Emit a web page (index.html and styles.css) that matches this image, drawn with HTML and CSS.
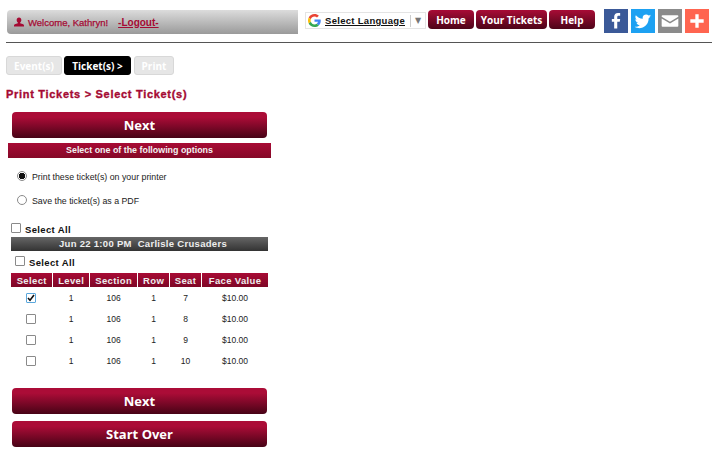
FILE: index.html
```html
<!DOCTYPE html>
<html lang="en">
<head>
  <meta charset="UTF-8">
  <title>Print Tickets</title>
  <link rel="stylesheet" href="styles.css">
</head>
<body>
  <div class="top">
    <div class="welcome">
      <svg class="user" viewBox="0 0 12 12"><path d="M6 0.5c1.8 0 2.8 1.3 2.8 3 0 1.3-.6 2.4-1.4 3v1l3.6 1.3c.6.2 1 .7 1 1.3V11.500H0V10.100c0-.6.4-1.100 1-1.300l3.600-1.300v-1C3.800 5.900 3.200 4.800 3.200 3.500c0-1.700 1-3 2.800-3z"/></svg>
      <span>Welcome, Kathryn!</span>
      <a href="#" class="logout">-Logout-</a>
    </div>
    <div class="translate">
      <svg class="glogo" viewBox="0 0 48 48">
        <path fill="#ea4335" d="M24 9.500c3.500 0 6.700 1.300 9.200 3.600l6.800-6.800C35.900 2.400 30.400 0 24 0 14.600 0 6.500 5.400 2.600 13.200l8 6.200C12.400 13.700 17.700 9.500 24 9.500z"/>
        <path fill="#4285f4" d="M47 24.500c0-1.600-.1-3.100-.4-4.500H24v9h12.900c-.6 3-2.200 5.500-4.700 7.200l7.700 6C44.400 37.900 47 31.800 47 24.500z"/>
        <path fill="#fbbc05" d="M10.500 28.600c-.5-1.400-.8-3-.8-4.600s.3-3.200.8-4.600l-8-6.200C.9 16.500 0 20.100 0 24s.9 7.500 2.600 10.800l7.900-6.200z"/>
        <path fill="#34a853" d="M24 48c6.500 0 11.900-2.100 15.900-5.800l-7.700-6c-2.200 1.400-4.900 2.300-8.200 2.300-6.300 0-11.600-4.200-13.500-9.900l-8 6.200C6.500 42.600 14.600 48 24 48z"/>
      </svg>
      <a href="#" class="lang">Select Language</a>
      <span class="arrow">▼</span>
    </div>
    <nav class="nav">
      <a href="#" class="nav-item home">Home</a>
      <a href="#" class="nav-item tickets">Your Tickets</a>
      <a href="#" class="nav-item help">Help</a>
    </nav>
    <div class="social">
      <span class="share fb"><svg viewBox="0 0 24 24"><path fill="#fff" d="M13.500 21v-8h3l.5-3.500h-3.500V7.400c0-1 .4-1.700 1.800-1.700H17V2.500c-.4-.1-1.500-.2-2.700-.2-2.700 0-4.500 1.600-4.500 4.600v2.600H7V13h2.800v8z"/></svg></span>
      <span class="share tw"><svg viewBox="0 0 24 24"><path fill="#fff" d="M22 6c-.7.3-1.500.6-2.400.7.900-.5 1.500-1.300 1.800-2.300-.8.500-1.700.8-2.600 1-1.600-1.700-4.300-1.800-5.900-.2-1.100 1-1.500 2.500-1.200 4C8.400 9 5.300 7.400 3.400 5c-1.100 1.900-.5 4.300 1.300 5.500-.7 0-1.300-.2-1.900-.5 0 2 1.400 3.700 3.300 4.100-.6.200-1.300.2-1.900.1.500 1.700 2.100 2.900 3.900 2.900-1.800 1.400-4 2-6.100 1.800 5.800 3.700 13.200 1.100 15.800-5 .7-1.600 1-3.300.9-5 .9-.6 1.600-1.300 2.300-2.900z"/></svg></span>
      <span class="share mail"><svg viewBox="0 0 24 24"><path fill="#fff" d="M3 5h18c.6 0 1 .4 1 1v.8l-10 6-10-6V6c0-.6.4-1 1-1zM2 9l10 6 10-6v9c0 .6-.4 1-1 1H3c-.6 0-1-.4-1-1z"/></svg></span>
      <span class="share more"><svg viewBox="0 0 24 24"><path fill="#fff" d="M10 4h4v6h6v4h-6v6h-4v-6H4v-4h6z"/></svg></span>
    </div>
  </div>
  <hr class="rule">

  <div class="steps">
    <span class="step">Event(s)</span>
    <span class="step current">Ticket(s) &gt;</span>
    <span class="step">Print</span>
  </div>

  <h1 class="title">Print Tickets &gt; Select Ticket(s)</h1>

  <div class="panel">
    <a href="#" class="big-btn">Next</a>
    <div class="options-bar">Select one of the following options</div>
    <label class="option"><input type="radio" name="how" checked> <span>Print these ticket(s) on your printer</span></label>
    <label class="option second"><input type="radio" name="how"> <span>Save the ticket(s) as a PDF</span></label>

    <label class="select-all first"><input type="checkbox"> Select All</label>
    <div class="event-bar">Jun 22 1:00 PM&nbsp; Carlisle Crusaders</div>
    <label class="select-all inner"><input type="checkbox"> Select All</label>

    <table class="tickets-table">
      <thead>
        <tr><th class="c1">Select</th><th class="c2">Level</th><th class="c3">Section</th><th class="c4">Row</th><th class="c5">Seat</th><th class="c6">Face Value</th></tr>
      </thead>
      <tbody>
        <tr><td><input type="checkbox" checked></td><td>1</td><td>106</td><td>1</td><td>7</td><td>$10.00</td></tr>
        <tr><td><input type="checkbox"></td><td>1</td><td>106</td><td>1</td><td>8</td><td>$10.00</td></tr>
        <tr><td><input type="checkbox"></td><td>1</td><td>106</td><td>1</td><td>9</td><td>$10.00</td></tr>
        <tr><td><input type="checkbox"></td><td>1</td><td>106</td><td>1</td><td>10</td><td>$10.00</td></tr>
      </tbody>
    </table>

    <a href="#" class="big-btn after-table">Next</a>
    <a href="#" class="big-btn start-over">Start Over</a>
  </div>
</body>
</html>
```

FILE: styles.css
```css
*{
  box-sizing: border-box;
}
html,body{
  height: 453px;
  overflow: hidden;
}
body{
  margin: 0;
  background: #fff;
  font-family: "Liberation Sans", Arial, sans-serif;
  font-size: 10px;
  color: #222;
}
a{
  text-decoration: none;
}

/* native controls, drawn to look like the older browser ones */
input[type=radio],
input[type=checkbox]{
  appearance: none;
  flex: none;
  background: #fff;
  border: 1px solid #8a8a8a;
}
input[type=radio]{
  border-radius: 50%;
}
input[type=radio]:checked{
  background: radial-gradient(circle, #111 3px, #fff 3.500px);
}
input[type=checkbox]{
  border-radius: 1px;
}
input[type=checkbox]:checked{
  border-color: #5aa7dc;
  background: #fff no-repeat center/8px 8px url("data:image/svg+xml,%3Csvg xmlns='http://www.w3.org/2000/svg' viewBox='0 0 8 8'%3E%3Cpath d='M1 4l2 2.300L7 1' fill='none' stroke='%23111' stroke-width='1.600'/%3E%3C/svg%3E");
}

.top{
  display: flex;
  align-items: flex-start;
  padding: 9px 0 0 7px;
  height: 42px;
}
.welcome{
  display: flex;
  align-items: center;
  width: 291px;
  height: 24px;
  margin-top: 1px;
  padding-left: 7px;
  border-radius: 4px 0 0 4px;
  background: linear-gradient(#dcdcdc, #9a9a9a);
  color: #a50a33;
}
.welcome .user{
  width: 10px;
  height: 10px;
  margin-right: 4px;
  fill: #a50a33;
}
.welcome span{
  font-size: 9.500px;
  -webkit-text-stroke: .25px #a50a33;
}
.logout{
  margin-left: 10px;
  color: #a50a33;
  font-weight: bold;
  text-decoration: underline;
}

.translate{
  display: flex;
  align-items: center;
  width: 121px;
  height: 17px;
  margin: 3px 0 0 7px;
  padding-left: 2px;
  border: 1px solid #e4e4e4;
}
.glogo{
  width: 13px;
  height: 13px;
  flex: none;
}
.lang{
  margin-left: 4px;
  color: #111;
  font-size: 9.500px;
  font-weight: bold;
  letter-spacing: .3px;
  white-space: nowrap;
  text-decoration: underline;
}
.arrow{
  margin-left: 5px;
  padding-left: 4px;
  border-left: 1px solid #ccc;
  color: #777;
  font-family: "DejaVu Sans", sans-serif;
  font-size: 8px;
  line-height: 12px;
}

.nav{
  display: flex;
  gap: 2px;
  margin: 1px 0 0 2px;
}
.nav-item{
  display: flex;
  align-items: center;
  justify-content: center;
  height: 19px;
  border-radius: 4px;
  background: linear-gradient(#a80c36, #4d0418);
  color: #fff;
  font-family: "Open Sans", sans-serif;
  font-size: 10px;
  font-weight: bold;
  white-space: nowrap;
}
.home{
  width: 46px;
}
.tickets{
  width: 71px;
}
.help{
  width: 46px;
}

.social{
  display: flex;
  gap: 3px;
  margin-left: 9px;
}
.share{
  display: flex;
  width: 24px;
  height: 24px;
  padding: 2px;
}
.share svg{
  width: 20px;
  height: 20px;
}
.fb{
  background: #3b5998;
}
.tw{
  background: #1da1f2;
}
.mail{
  background: #8b8b8b;
}
.more{
  background: #ff6550;
}

.rule{
  width: 706px;
  height: 1px;
  margin: 0 0 0 6px;
  border: 0;
  background: #555;
}

.steps{
  display: flex;
  gap: 2px;
  margin: 13px 0 0 6px;
}
.step{
  display: flex;
  align-items: center;
  justify-content: center;
  width: 56px;
  height: 19px;
  border: 1px solid #d8d8d8;
  border-radius: 3px;
  background: #e6e6e6;
  color: #fff;
  font-family: "Open Sans", sans-serif;
  font-size: 10px;
  font-weight: bold;
}
.step.current{
  width: 67px;
  background: #000;
  border-color: #000;
}
.step:last-child{
  width: 40px;
  margin-left: 1px;
}

.title{
  margin: 12px 0 0 6px;
  color: #a50a33;
  font-size: 11px;
  line-height: 14px;
  letter-spacing: .7px;
  -webkit-text-stroke: .35px #a50a33;
}

.panel{
  width: 272px;
}
.big-btn{
  display: flex;
  align-items: center;
  justify-content: center;
  width: 255px;
  height: 26px;
  margin: 11px 0 0 12px;
  border-radius: 4px;
  background: linear-gradient(#ab0c37 20%, #470316);
  color: #fff;
  font-family: "Open Sans", sans-serif;
  font-size: 13px;
  font-weight: bold;
}
.options-bar{
  width: 263px;
  height: 15px;
  margin: 5px 0 0 8px;
  background: linear-gradient(#a80b35, #850827);
  color: #f2f2f2;
  font-size: 8.900px;
  font-weight: bold;
  line-height: 14px;
  text-align: center;
}
.option{
  display: flex;
  align-items: center;
  height: 12px;
  margin: 12px 0 0 17px;
  font-size: 8.800px;
}
.option input{
  width: 10px;
  height: 10px;
  margin: 0 5px 0 0;
}
.option span{
  padding-top: 2px;
}
.option.second{
  margin-top: 12px;
}

.select-all{
  display: flex;
  align-items: center;
  height: 11px;
  color: #111;
  font-size: 9.500px;
  font-weight: bold;
  letter-spacing: .35px;
}
.select-all input{
  width: 10px;
  height: 10px;
  margin: -3px 4px 0 0;
}
.select-all.first{
  margin: 18px 0 0 11px;
}
.select-all.inner{
  margin: 6px 0 0 15px;
}
.event-bar{
  width: 257px;
  height: 14px;
  margin: 2px 0 0 11px;
  padding-left: 7px;
  background: linear-gradient(#666, #333);
  color: #eee;
  font-size: 9.500px;
  font-weight: bold;
  letter-spacing: .3px;
  line-height: 14px;
  text-align: center;
}

.tickets-table{
  width: 259px;
  margin: 5px 0 0 10px;
  border-collapse: separate;
  border-spacing: 1px 0;
  table-layout: fixed;
}
.tickets-table th{
  height: 14px;
  padding: 0;
  background: linear-gradient(#a80b35, #7e0726);
  color: #eee;
  font-size: 9.500px;
  letter-spacing: .35px;
}
.tickets-table td{
  height: 21px;
  padding: 0;
  color: #222;
  font-size: 8.500px;
  text-align: center;
}
.tickets-table td input{
  display: block;
  width: 10px;
  height: 10px;
  margin: 0 auto 0 15px;
}
.c1{
  width: 41px;
}
.c2{
  width: 35px;
}
.c3{
  width: 47px;
}
.c4{
  width: 30px;
}
.c5{
  width: 31px;
}
.c6{
  width: 65px;
}

.big-btn.after-table{
  margin-top: 17px;
}
.big-btn.start-over{
  margin-top: 7px;
}
```
